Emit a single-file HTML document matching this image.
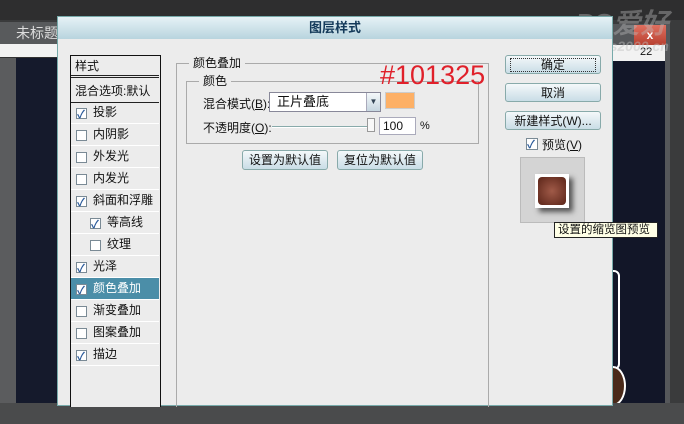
<!DOCTYPE html>
<html><head><meta charset="utf-8"><style>
*{margin:0;padding:0;box-sizing:border-box}
body{width:684px;height:424px;overflow:hidden;background:#3a3b3c;font-family:"Liberation Sans","Noto Sans CJK SC",sans-serif;font-size:12px;color:#111;position:relative}
.a{position:absolute}
.btn{position:absolute;border:1px solid #8aa;border-radius:3px;background:linear-gradient(#f4f8fa,#c9dde6);text-align:center;font-size:12px;line-height:18px;color:#111}
.cb{position:absolute;width:11px;height:11px;border:1px solid #7a8a95;background:#fff}
.cb.on::after{content:"✓";position:absolute;left:0;top:-3px;font-size:11px;color:#2a5a9a;font-weight:bold}
.it{position:absolute;left:0;width:88px;height:22px;border-bottom:1px solid #fff;font-size:12px;line-height:21px}
</style></head><body>
<div class="a" style="left:0;top:0;width:684px;height:20px;background:#2e2e2f"></div>
<div class="a" style="left:0;top:22px;width:60px;height:22px;background:#585a5c;color:#ddd;font-size:14px;line-height:22px;padding-left:16px">未标题</div>
<div class="a" style="left:0;top:44px;width:60px;height:14px;background:#f2f2f2;border-bottom:1px solid #333"></div>
<div class="a" style="left:0;top:58px;width:60px;height:345px;background:#151a2c"></div>
<div class="a" style="left:0;top:58px;width:16px;height:345px;background:#5b5c5e"></div>
<!-- right document -->
<div class="a" style="left:610px;top:24px;width:60px;height:380px;background:#55575a"></div>
<div class="a" style="left:634px;top:25px;width:32px;height:20px;background:linear-gradient(#e07060,#b84030);color:#fff;font-weight:bold;text-align:center;line-height:20px">x</div>
<div class="a" style="left:610px;top:45px;width:55px;height:16px;background:#f2f2f2;font-size:11px;padding-left:30px;line-height:14px">22</div>
<div class="a" style="left:610px;top:61px;width:55px;height:342px;background:#121628"></div>
<div class="a" style="left:600px;top:270px;width:20px;height:100px;border:2px solid #fff;border-radius:6px"></div>
<div class="a" style="left:600px;top:366px;width:26px;height:40px;border:2px solid #fff;border-radius:50%;background:#4a2a1a"></div>
<div class="a" style="left:0;top:403px;width:684px;height:21px;background:#4a4b4c"></div>
<div class="a" style="left:575px;top:2px;color:rgba(190,190,190,.4);font-size:28px;font-weight:bold;font-style:italic">PS爱好者</div>
<div class="a" style="left:565px;top:38px;color:rgba(190,190,190,.45);font-size:14px;font-style:italic;font-weight:bold">www.ps2000.cn</div>
<!-- dialog -->
<div class="a" style="left:57px;top:16px;width:556px;height:390px;background:#ececec;border:1px solid #7aa"></div>
<div class="a" style="left:58px;top:17px;width:554px;height:22px;background:linear-gradient(#e6f2f6,#b8d4de);text-align:center;font-size:13px;font-weight:bold;color:#143a5a;line-height:22px">图层样式</div>
<!-- left list -->
<div class="a" style="left:70px;top:55px;width:91px;height:352px;border:1px solid #111;border-bottom:none;background:#ececec">
<div class="it" style="top:0;height:22px;padding-left:4px;border-bottom:3px double #222">样式</div>
<div class="it" style="top:24px;height:23px;padding-left:4px;border-bottom:1px solid #222;line-height:23px">混合选项:默认</div>
<div class="it" style="top:46px;padding-left:22px">投影</div><div class="cb on" style="left:5px;top:52px"></div>
<div class="it" style="top:68px;padding-left:22px">内阴影</div><div class="cb" style="left:5px;top:74px"></div>
<div class="it" style="top:90px;padding-left:22px">外发光</div><div class="cb" style="left:5px;top:96px"></div>
<div class="it" style="top:112px;padding-left:22px">内发光</div><div class="cb" style="left:5px;top:118px"></div>
<div class="it" style="top:134px;padding-left:22px">斜面和浮雕</div><div class="cb on" style="left:5px;top:140px"></div>
<div class="it" style="top:156px;padding-left:36px">等高线</div><div class="cb on" style="left:19px;top:162px"></div>
<div class="it" style="top:178px;padding-left:36px">纹理</div><div class="cb" style="left:19px;top:184px"></div>
<div class="it" style="top:200px;padding-left:22px">光泽</div><div class="cb on" style="left:5px;top:206px"></div>
<div class="it" style="top:222px;padding-left:22px;background:#4b8ea8;color:#fff">颜色叠加</div><div class="cb on" style="left:5px;top:228px"></div>
<div class="it" style="top:244px;padding-left:22px">渐变叠加</div><div class="cb" style="left:5px;top:250px"></div>
<div class="it" style="top:266px;padding-left:22px">图案叠加</div><div class="cb" style="left:5px;top:272px"></div>
<div class="it" style="top:288px;padding-left:22px">描边</div><div class="cb on" style="left:5px;top:294px"></div>
</div>
<!-- main group -->
<div class="a" style="left:176px;top:63px;width:313px;height:344px;border:1px solid #aaa;border-bottom:none"></div>
<div class="a" style="left:189px;top:54px;background:#ececec;padding:0 4px">颜色叠加</div>
<div class="a" style="left:186px;top:81px;width:293px;height:63px;border:1px solid #aaa"></div>
<div class="a" style="left:199px;top:72px;background:#ececec;padding:0 4px">颜色</div>
<div class="a" style="left:380px;top:60px;color:#e0202a;font-size:27px">#101325</div>
<div class="a" style="left:203px;top:95px">混合模式(<u>B</u>):</div>
<div class="a" style="left:269px;top:92px;width:112px;height:20px;border:1px solid #889;background:#fff;padding-left:7px;font-size:13px;line-height:18px">正片叠底</div>
<div class="a" style="left:366px;top:93px;width:14px;height:18px;background:linear-gradient(#f4f8fa,#c6d6e0);border-left:1px solid #aab;font-size:8px;text-align:center;line-height:18px;color:#345">▼</div>
<div class="a" style="left:385px;top:92px;width:30px;height:17px;background:#fdb066;border:1px solid #ccc"></div>
<div class="a" style="left:203px;top:119px">不透明度(<u>O</u>):</div>
<div class="a" style="left:272px;top:126px;width:100px;height:2px;background:#8aa;border-bottom:1px solid #fff"></div>
<div class="a" style="left:367px;top:118px;width:8px;height:14px;background:#f8f8f8;border:1px solid #999"></div>
<div class="a" style="left:379px;top:117px;width:37px;height:18px;border:1px solid #aab;background:#fff;padding-left:3px;line-height:16px">100</div>
<div class="a" style="left:420px;top:120px;font-size:11px">%</div>
<div class="btn" style="left:242px;top:150px;width:86px;height:20px">设置为默认值</div>
<div class="btn" style="left:337px;top:150px;width:86px;height:20px">复位为默认值</div>
<!-- right -->
<div class="btn" style="left:505px;top:55px;width:96px;height:19px"><span style="display:block;margin:2px 4px;border:1px dotted #333;line-height:12px">确定</span></div>
<div class="btn" style="left:505px;top:83px;width:96px;height:19px">取消</div>
<div class="btn" style="left:505px;top:111px;width:96px;height:19px">新建样式(W)...</div>
<div class="cb on" style="left:526px;top:138px;width:12px;height:12px"></div>
<div class="a" style="left:542px;top:136px">预览(<u>V</u>)</div>
<div class="a" style="left:520px;top:157px;width:65px;height:66px;background:#d4d4d4;border:1px solid #bbb"></div>
<div class="a" style="left:535px;top:174px;width:34px;height:34px;background:#fff;box-shadow:4px 4px 5px #555"></div>
<div class="a" style="left:538px;top:177px;width:28px;height:28px;background:radial-gradient(#a05a48,#5a2418);border-radius:4px"></div>
<div class="a" style="left:554px;top:222px;width:104px;height:16px;background:#ffffe6;border:1px solid #222;font-size:11.5px;line-height:14px;padding-left:3px;white-space:nowrap">设置的缩览图预览</div>
</body></html>
